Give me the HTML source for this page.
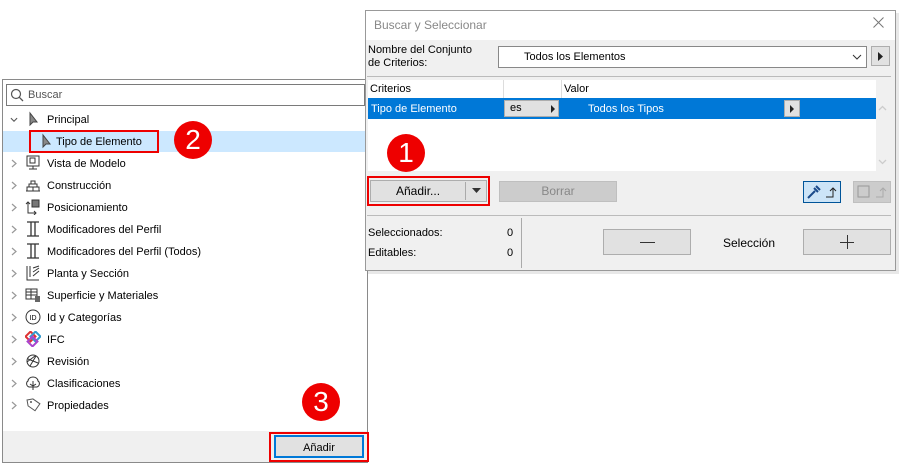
<!DOCTYPE html>
<html><head><meta charset="utf-8"><style>
*{box-sizing:border-box;margin:0;padding:0}
body{width:906px;height:471px;background:#fff;position:relative;overflow:hidden;font-family:"Liberation Sans",sans-serif;font-size:11px;color:#000}
.a{position:absolute}
.row{position:absolute;left:2px;width:364px;height:22px;line-height:22px}
.row .ch{position:absolute;left:8px;top:7px;width:8px;height:9px}
.row .ic{position:absolute;left:23px;top:3px;width:16px;height:16px}
.row .t{position:absolute;left:45px;top:1px}
.circ{position:absolute;width:38px;height:38px;border-radius:50%;background:#e00;color:#fff;font-size:28px;line-height:38px;text-align:center}
.btn{position:absolute;background:#e1e1e1;border:1px solid #adadad;text-align:center}
</style></head><body>
<svg width="0" height="0" style="position:absolute"><defs><path id="chr" d="M2 1l4 3.5-4 3.5" fill="none" stroke="#999" stroke-width="1.2"/></defs></svg>
<!-- left panel -->
<div class="a" style="left:2px;top:79px;width:366px;height:384px;border:1px solid #8a8a8a;background:#fff"></div>
<div class="a" style="left:3px;top:431px;width:364px;height:31px;background:#f0f0f0"></div>
<div class="a" style="left:6px;top:84px;width:359px;height:22px;border:1px solid #7a7a7a;background:#fff"></div>
<svg class="a" style="left:10px;top:88px" width="14" height="14"><circle cx="6" cy="6" r="4.5" fill="none" stroke="#555" stroke-width="1.2"/><line x1="9.3" y1="9.3" x2="13" y2="13" stroke="#555" stroke-width="1.3"/></svg>
<div class="a" style="left:28px;top:89px;color:#555">Buscar</div>
<div class="a" style="left:3px;top:131px;width:364px;height:21px;background:#cce8ff"></div>
<div class="row" style="top:108px"><svg class="ch" viewBox="0 0 9 9"><path d="M1 3l3.5 3.5L8 3" fill="none" stroke="#555" stroke-width="1.2"/></svg><svg class="ic" viewBox="0 0 16 16"><path d="M5 2 L5 14 L8 11 L12 11 Z" fill="#888" stroke="#444"/></svg><span class="t">Principal</span></div>
<div class="row" style="top:130px"><svg class="ic" style="left:36px" viewBox="0 0 16 16"><path d="M5 2 L5 14 L8 11 L12 11 Z" fill="#888" stroke="#444"/></svg><span class="t" style="left:54px">Tipo de Elemento</span></div>
<div class="a" style="left:29px;top:130px;width:130px;height:23px;border:2px solid #e00"></div>
<div class="row" style="top:152px"><svg class="ch"><use href="#chr"/></svg><svg class="ic" viewBox="0 0 16 16"><rect x="2" y="1" width="12" height="10" fill="none" stroke="#333"/><rect x="5" y="3" width="5" height="5" fill="none" stroke="#333"/><path d="M8 11v3M4 14h8" stroke="#333"/></svg><span class="t">Vista de Modelo</span></div>
<div class="row" style="top:174px"><svg class="ch"><use href="#chr"/></svg><svg class="ic" viewBox="0 0 16 16"><path d="M1 14h14M2 14V10h12v4M4 10V7h8v3M6 7V4h4v3M8 10v4" fill="none" stroke="#333"/></svg><span class="t">Construcción</span></div>
<div class="row" style="top:196px"><svg class="ch"><use href="#chr"/></svg><svg class="ic" viewBox="0 0 16 16"><rect x="7" y="1" width="7" height="7" fill="#777" stroke="#333"/><path d="M3 3v11h8M1 5l2-2 2 2M9 12l2 2-2 2" fill="none" stroke="#333"/></svg><span class="t">Posicionamiento</span></div>
<div class="row" style="top:218px"><svg class="ch"><use href="#chr"/></svg><svg class="ic" viewBox="0 0 16 16"><path d="M2 1h12M2 15h12M6 1v14M10 1v14" fill="none" stroke="#333" stroke-width="1.3"/></svg><span class="t">Modificadores del Perfil</span></div>
<div class="row" style="top:240px"><svg class="ch"><use href="#chr"/></svg><svg class="ic" viewBox="0 0 16 16"><path d="M2 1h12M2 15h12M6 1v14M10 1v14" fill="none" stroke="#333" stroke-width="1.3"/></svg><span class="t">Modificadores del Perfil (Todos)</span></div>
<div class="row" style="top:262px"><svg class="ch"><use href="#chr"/></svg><svg class="ic" viewBox="0 0 16 16"><path d="M2 1v14h12M5 1v11M8 3l6-2M8 7l6-4M8 11l6-5" fill="none" stroke="#333"/></svg><span class="t">Planta y Sección</span></div>
<div class="row" style="top:284px"><svg class="ch"><use href="#chr"/></svg><svg class="ic" viewBox="0 0 16 16"><rect x="1" y="2" width="11" height="10" fill="none" stroke="#333"/><path d="M1 5h11M1 8h11M6 2v10" stroke="#333"/><rect x="10" y="9" width="5" height="6" fill="#666"/></svg><span class="t">Superficie y Materiales</span></div>
<div class="row" style="top:306px"><svg class="ch"><use href="#chr"/></svg><svg class="ic" viewBox="0 0 16 16"><circle cx="8" cy="8" r="7" fill="none" stroke="#333"/><text x="8" y="11" font-size="7" text-anchor="middle" font-family="Liberation Sans">ID</text></svg><span class="t">Id y Categorías</span></div>
<div class="row" style="top:328px"><svg class="ch"><use href="#chr"/></svg><svg class="ic" viewBox="0 0 16 16"><rect x="2" y="2" width="7" height="7" transform="rotate(45 5.5 5.5)" fill="none" stroke="#d33" stroke-width="2"/><rect x="7" y="2" width="7" height="7" transform="rotate(45 10.5 5.5)" fill="none" stroke="#39c" stroke-width="2"/><rect x="4" y="7" width="7" height="7" transform="rotate(45 7.5 10.5)" fill="none" stroke="#a4c" stroke-width="2"/></svg><span class="t">IFC</span></div>
<div class="row" style="top:350px"><svg class="ch"><use href="#chr"/></svg><svg class="ic" viewBox="0 0 16 16"><circle cx="8" cy="8" r="6" fill="none" stroke="#333"/><path d="M3 6l10 4M5 13l6-10M2 9l8-6" stroke="#333"/></svg><span class="t">Revisión</span></div>
<div class="row" style="top:372px"><svg class="ch"><use href="#chr"/></svg><svg class="ic" viewBox="0 0 16 16"><path d="M8 2c3 0 5 2 5 4 2 1 2 5-1 6H4c-3-1-3-5-1-6 0-2 2-4 5-4zM8 6v9M5 9l3 2 3-2" fill="none" stroke="#333"/></svg><span class="t">Clasificaciones</span></div>
<div class="row" style="top:394px"><svg class="ch"><use href="#chr"/></svg><svg class="ic" viewBox="0 0 16 16"><path d="M3 2l6 0 6 6-6 6-6-6z" fill="none" stroke="#555" transform="rotate(-10 8 8)"/><circle cx="6" cy="5" r="1" fill="#555"/></svg><span class="t">Propiedades</span></div>
<div class="btn" style="left:274px;top:435px;width:90px;height:23px;border:2px solid #0078d7;line-height:20px;padding-top:1px">Añadir</div>
<div class="a" style="left:269px;top:432px;width:100px;height:30px;border:2px solid #e00"></div>
<div class="circ" style="left:174px;top:121px">2</div>
<div class="circ" style="left:302px;top:383px">3</div>

<!-- dialog -->
<div class="a" style="left:368px;top:13px;width:531px;height:261px;background:#e8e8e8"></div>
<div class="a" style="left:365px;top:10px;width:531px;height:261px;border:1px solid #999;background:#f0f0f0"></div>
<div class="a" style="left:366px;top:11px;width:529px;height:29px;background:#fff"></div>
<div class="a" style="left:374px;top:18px;font-size:12px;color:#888">Buscar y Seleccionar</div>
<svg class="a" style="left:873px;top:17px" width="11" height="11"><path d="M0.5 0.5l10 10M10.5 0.5l-10 10" stroke="#777"/></svg>
<div class="a" style="left:368px;top:44px;line-height:13px">Nombre del Conjunto<br>de Criterios:</div>
<div class="a" style="left:498px;top:46px;width:369px;height:22px;border:1px solid #888;background:#fff;line-height:20px;padding-left:25px">Todos los Elementos</div>
<svg class="a" style="left:852px;top:53px" width="10" height="8"><path d="M1 2l4 4 4-4" fill="none" stroke="#333"/></svg>
<div class="btn" style="left:871px;top:46px;width:19px;height:20px"></div>
<svg class="a" style="left:878px;top:52px" width="6" height="9"><path d="M0 0l5 4.5L0 9z" fill="#222"/></svg>
<div class="a" style="left:367px;top:76px;width:524px;height:1px;background:#bbb"></div>
<div class="a" style="left:368px;top:80px;width:508px;height:91px;background:#fff"></div>
<div class="a" style="left:503px;top:80px;width:1px;height:18px;background:#ddd"></div>
<div class="a" style="left:561px;top:80px;width:1px;height:18px;background:#ddd"></div>
<div class="a" style="left:370px;top:83px">Criterios</div>
<div class="a" style="left:564px;top:83px">Valor</div>
<div class="a" style="left:368px;top:98px;width:508px;height:21px;background:#0078d7"></div>
<div class="a" style="left:371px;top:103px;color:#fff">Tipo de Elemento</div>
<div class="a" style="left:504px;top:100px;width:55px;height:17px;background:#e1e1e1;border:1px solid #adadad;padding-left:5px;line-height:15px">es</div>
<svg class="a" style="left:551px;top:105px" width="5" height="8"><path d="M0 0l4 4-4 4z" fill="#222"/></svg>
<div class="a" style="left:588px;top:103px;color:#fff">Todos los Tipos</div>
<div class="a" style="left:784px;top:100px;width:16px;height:17px;background:#e1e1e1;border:1px solid #adadad"></div>
<svg class="a" style="left:790px;top:105px" width="5" height="8"><path d="M0 0l4 4-4 4z" fill="#222"/></svg>
<svg class="a" style="left:878px;top:105px" width="9" height="6"><path d="M1 5l3.5-3.5L8 5" fill="none" stroke="#ccc" stroke-width="1.3"/></svg>
<svg class="a" style="left:878px;top:159px" width="9" height="6"><path d="M1 1l3.5 3.5L8 1" fill="none" stroke="#ccc" stroke-width="1.3"/></svg>
<div class="circ" style="left:387px;top:134px">1</div>
<div class="btn" style="left:370px;top:180px;width:117px;height:22px;line-height:20px;text-align:left;padding-left:25px;font-size:12px">Añadir...</div>
<div class="a" style="left:465px;top:182px;width:1px;height:18px;background:#aaa"></div>
<svg class="a" style="left:472px;top:188px" width="9" height="5"><path d="M0 0h9L4.5 5z" fill="#333"/></svg>
<div class="a" style="left:367px;top:176px;width:123px;height:30px;border:2px solid #e00"></div>
<div class="btn" style="left:499px;top:181px;width:118px;height:21px;background:#ccc;border-color:#bfbfbf;color:#888;line-height:19px;font-size:12px">Borrar</div>
<div class="a" style="left:803px;top:181px;width:38px;height:22px;background:#cce4f7;border:1px solid #005499"></div>
<svg class="a" style="left:806px;top:184px" width="33" height="16"><path d="M2 14l7-7M8 4l4 4M10 2l4 4" stroke="#1a4a8a" stroke-width="2"/><path d="M20 13h7v-9M24 7l3-3 3 3" fill="none" stroke="#222"/></svg>
<div class="a" style="left:853px;top:181px;width:38px;height:22px;background:#ccc;border:1px solid #bfbfbf"></div>
<svg class="a" style="left:856px;top:184px" width="33" height="16"><rect x="2" y="2" width="11" height="11" fill="none" stroke="#999"/><path d="M20 13h7v-9M24 7l3-3 3 3" fill="none" stroke="#aaa"/></svg>
<div class="a" style="left:367px;top:215px;width:524px;height:1px;background:#bbb"></div>
<div class="a" style="left:521px;top:218px;width:1px;height:50px;background:#aaa"></div>
<div class="a" style="left:368px;top:227px">Seleccionados:</div>
<div class="a" style="left:507px;top:227px">0</div>
<div class="a" style="left:368px;top:247px">Editables:</div>
<div class="a" style="left:507px;top:247px">0</div>
<div class="btn" style="left:603px;top:229px;width:88px;height:26px"></div>
<div class="a" style="left:640px;top:242px;width:15px;height:1px;background:#333"></div>
<div class="a" style="left:723px;top:236px;font-size:12px">Selección</div>
<div class="btn" style="left:803px;top:229px;width:88px;height:26px"></div>
<div class="a" style="left:840px;top:242px;width:14px;height:1px;background:#333"></div>
<div class="a" style="left:847px;top:235px;width:1px;height:14px;background:#333"></div>
</body></html>
